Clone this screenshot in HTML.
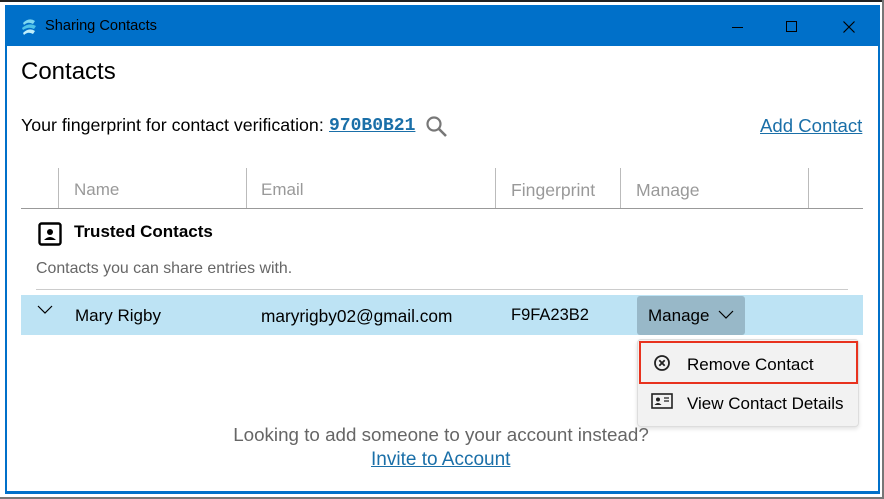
<!DOCTYPE html>
<html><head><meta charset="utf-8"><style>
*{margin:0;padding:0;box-sizing:border-box}
body{width:884px;height:499px;background:#fff;position:relative;overflow:hidden;font-family:"Liberation Sans",sans-serif;color:#000}
.a{position:absolute;white-space:nowrap}
</style></head><body>
<div class="a" style="left:0;top:0;width:884px;height:2px;background:#222"></div>
<div class="a" style="left:882px;top:0;width:2px;height:499px;background:#777"></div>
<div class="a" style="left:0;top:497px;width:884px;height:2px;background:#777"></div>
<div class="a" style="left:5px;top:5px;width:875px;height:489px;background:#0070c9"></div>
<div class="a" style="left:7px;top:46px;width:871px;height:445px;background:#fff"></div>
<!-- title bar -->
<svg class="a" style="left:20px;top:17px" width="18" height="20" viewBox="0 0 18 20"><path d="M3 6 Q9 0 15 4 L13 7 Q8 4 4 8Z" fill="#7fd8f0"/><path d="M2 11 Q9 5 16 9 L14 12 Q9 9 3 13Z" fill="#4fc3e8"/><path d="M3 16 Q9 10 15 14 L13 17 Q8 14 4 18Z" fill="#bfeefa"/></svg>
<div class="a" style="left:45px;top:18px;font-size:14.6px;color:#000">Sharing Contacts</div>
<div class="a" style="left:732px;top:27px;width:11px;height:1px;background:#000"></div>
<div class="a" style="left:786px;top:21px;width:11px;height:11px;border:1px solid #000"></div>
<svg class="a" style="left:843px;top:21px" width="12" height="12"><path d="M0.5 0.5L11.5 11.5M11.5 0.5L0.5 11.5" stroke="#000" stroke-width="1.2"/></svg>
<!-- content -->
<div class="a" style="left:21px;top:58px;font-size:24px">Contacts</div>
<div class="a" style="left:21px;top:115px;font-size:17.8px">Your fingerprint for contact verification:</div>
<div class="a" style="left:329px;top:116px;font-family:'Liberation Mono',monospace;font-weight:bold;color:#1a6fa8;text-decoration:underline;font-size:18px">970B0B21</div>
<svg class="a" style="left:425px;top:115px" width="24" height="24"><circle cx="9" cy="9" r="6.5" fill="none" stroke="#777" stroke-width="2.2"/><path d="M14 14L21 21" stroke="#777" stroke-width="2.6"/></svg>
<div class="a" style="left:760px;top:115px;font-size:18.6px;color:#1a6fa8;text-decoration:underline">Add Contact</div>
<!-- header -->
<div class="a" style="left:58px;top:168px;width:1px;height:40px;background:#bbb"></div>
<div class="a" style="left:246px;top:168px;width:1px;height:40px;background:#bbb"></div>
<div class="a" style="left:495px;top:168px;width:1px;height:40px;background:#bbb"></div>
<div class="a" style="left:620px;top:168px;width:1px;height:40px;background:#bbb"></div>
<div class="a" style="left:808px;top:168px;width:1px;height:40px;background:#bbb"></div>
<div class="a" style="left:21px;top:208px;width:842px;height:1px;background:#999"></div>
<div class="a" style="left:74px;top:180px;font-size:17px;color:#999">Name</div>
<div class="a" style="left:261px;top:180px;font-size:17px;color:#999">Email</div>
<div class="a" style="left:511px;top:180px;font-size:17.6px;color:#999">Fingerprint</div>
<div class="a" style="left:636px;top:180px;font-size:17.6px;color:#999">Manage</div>
<!-- trusted -->
<svg class="a" style="left:38px;top:222px" width="24" height="24"><rect x="1.5" y="1.5" width="21" height="21" rx="2" fill="none" stroke="#000" stroke-width="2.4"/><circle cx="12" cy="10" r="3" fill="#000"/><path d="M6 18Q12 12 18 18Z" fill="#000"/></svg>
<div class="a" style="left:74px;top:222px;font-size:17px;font-weight:bold">Trusted Contacts</div>
<div class="a" style="left:36px;top:260px;font-size:15.9px;color:#666">Contacts you can share entries with.</div>
<div class="a" style="left:36px;top:289px;width:812px;height:1px;background:#ccc"></div>
<div class="a" style="left:21px;top:295px;width:842px;height:40px;background:#bde3f4"></div>
<svg class="a" style="left:37px;top:305px" width="16" height="10"><path d="M1 1L8 8L15 1" fill="none" stroke="#000" stroke-width="1.2"/></svg>
<div class="a" style="left:75px;top:306px;font-size:17px">Mary Rigby</div>
<div class="a" style="left:261px;top:306px;font-size:17.3px">maryrigby02@gmail.com</div>
<div class="a" style="left:511px;top:306px;font-size:16.5px">F9FA23B2</div>
<div class="a" style="left:637px;top:296px;width:108px;height:39px;background:#98b8c8;border-radius:3px"></div>
<div class="a" style="left:648px;top:306px;font-size:17px">Manage</div>
<svg class="a" style="left:718px;top:310px" width="16" height="10"><path d="M1 1L8 8L15 1" fill="none" stroke="#000" stroke-width="1.2"/></svg>
<!-- dropdown -->
<div class="a" style="left:637px;top:339px;width:222px;height:88px;background:#f2f2f2;border:1px solid #ddd;border-radius:4px;box-shadow:0 2px 4px rgba(0,0,0,.12)"></div>
<div class="a" style="left:639px;top:341px;width:219px;height:43px;border:2px solid #e8321e"></div>
<svg class="a" style="left:653px;top:354px" width="18" height="18"><circle cx="9" cy="9" r="7" fill="none" stroke="#222" stroke-width="1.8"/><path d="M6.3 6.3L11.7 11.7M11.7 6.3L6.3 11.7" stroke="#222" stroke-width="1.8"/></svg>
<div class="a" style="left:687px;top:355px;font-size:17px">Remove Contact</div>
<svg class="a" style="left:651px;top:393px" width="22" height="16"><rect x="1" y="1" width="20" height="14" fill="none" stroke="#222" stroke-width="1.6"/><circle cx="7" cy="6.5" r="2" fill="#222"/><path d="M3.5 12Q7 8 10.5 12Z" fill="#222"/><path d="M13 5H18M13 8H18" stroke="#222" stroke-width="1.3"/></svg>
<div class="a" style="left:687px;top:394px;font-size:17px">View Contact Details</div>
<!-- bottom -->
<div class="a" style="left:213px;top:424px;width:456px;text-align:center;font-size:18.8px;color:#666">Looking to add someone to your account instead?</div>
<div class="a" style="left:371px;top:449px;font-size:19px;color:#1a6fa8;text-decoration:underline">Invite to Account</div>
</body></html>
